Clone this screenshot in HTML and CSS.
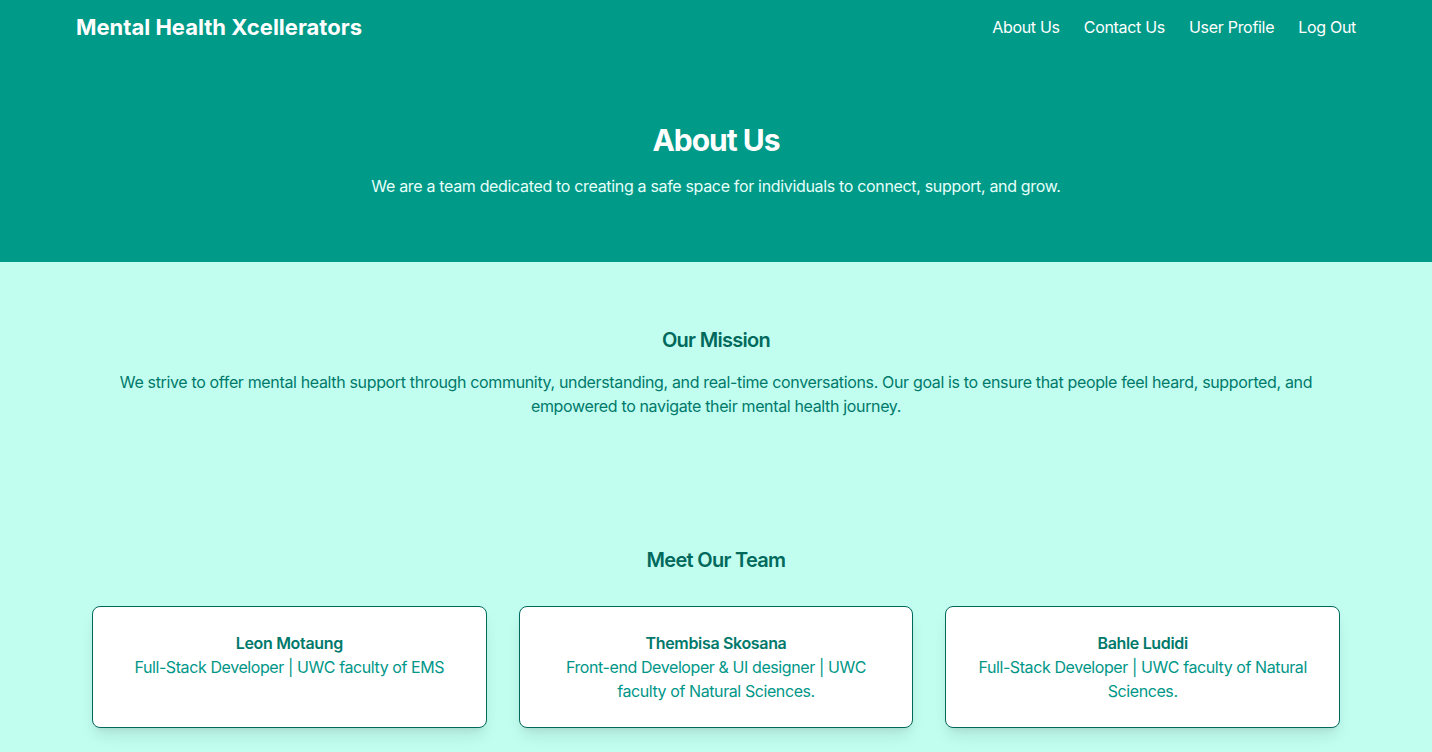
FILE: index.html
```html
<!DOCTYPE html>
<html lang="en">
<head>
<meta charset="utf-8">
<title>About Us - Mental Health Xcellerators</title>
<link rel="stylesheet" href="styles.css">
</head>
<body>
<header class="top">
  <nav class="nav container">
    <div class="brand">Mental Health Xcellerators</div>
    <ul class="links">
      <li><a href="#">About Us</a></li>
      <li><a href="#">Contact Us</a></li>
      <li><a href="#">User Profile</a></li>
      <li><a href="#">Log Out</a></li>
    </ul>
  </nav>
  <section class="hero">
    <h1>About Us</h1>
    <p>We are a team dedicated to creating a safe space for individuals to connect, support, and grow.</p>
  </section>
</header>
<main class="main">
  <section class="block container">
    <h2>Our Mission</h2>
    <p class="mission">We strive to offer mental health support through community, understanding, and real-time conversations. Our goal is to ensure that people feel heard, supported, and empowered to navigate their mental health journey.</p>
  </section>
  <section class="block container">
    <h2 class="team-title">Meet Our Team</h2>
    <div class="team">
      <div class="card">
        <h3>Leon Motaung</h3>
        <p>Full-Stack Developer | UWC faculty of EMS</p>
      </div>
      <div class="card">
        <h3>Thembisa Skosana</h3>
        <p>Front-end Developer &amp; UI designer | UWC faculty of Natural Sciences.</p>
      </div>
      <div class="card">
        <h3>Bahle Ludidi</h3>
        <p>Full-Stack Developer | UWC faculty of Natural Sciences.</p>
      </div>
    </div>
  </section>
</main>
</body>
</html>
```
FILE: styles.css
```css
* { box-sizing: border-box; }
html, body { margin: 0; padding: 0; }
body {
  font-family: Inter, "Noto Sans", sans-serif;
  font-size: 16px;
  line-height: 24px;
  letter-spacing: -0.38px;
  background: #c1fef0;
  color: #00695c;
}
h1, h2, h3, p, ul { margin: 0; padding: 0; }
.container { max-width: 1280px; margin: 0 auto; }
.top { background: #009a88; color: #fff; }
.nav {
  height: 54px;
  display: flex;
  align-items: center;
  justify-content: space-between;
}
.brand { font-size: 22px; font-weight: 700; line-height: 32px; letter-spacing: 0; }
.links { list-style: none; display: flex; gap: 24px; }
.links a { color: #fff; text-decoration: none; font-size: 16px; letter-spacing: -0.3px; }
.hero { text-align: center; padding: 68px 16px 64px; }
.hero h1 { font-size: 30px; line-height: 36px; font-weight: 700; letter-spacing: -1px; }
.hero p { margin-top: 16px; color: #e6fffa; letter-spacing: -0.33px; }
.block { padding: 64px 16px; text-align: center; }
.block h2 { font-size: 20px; line-height: 28px; font-weight: 600; color: #00695c; letter-spacing: -0.7px; }
.mission { margin-top: 16px; color: #00796b; letter-spacing: -0.35px; }
.team-title { margin-bottom: 32px; }
.team { display: grid; grid-template-columns: repeat(3, 1fr); gap: 32px; }
.card {
  background: #fff;
  border: 1px solid #00695c;
  border-radius: 8px;
  padding: 24px;
  box-shadow: 0 10px 15px -3px rgba(0,0,0,0.1), 0 4px 6px -4px rgba(0,0,0,0.1);
}
.card h3 { font-size: 16px; line-height: 24px; font-weight: 600; color: #00796b; letter-spacing: -0.33px; }
.card p { color: #009688; letter-spacing: -0.41px; }
```
